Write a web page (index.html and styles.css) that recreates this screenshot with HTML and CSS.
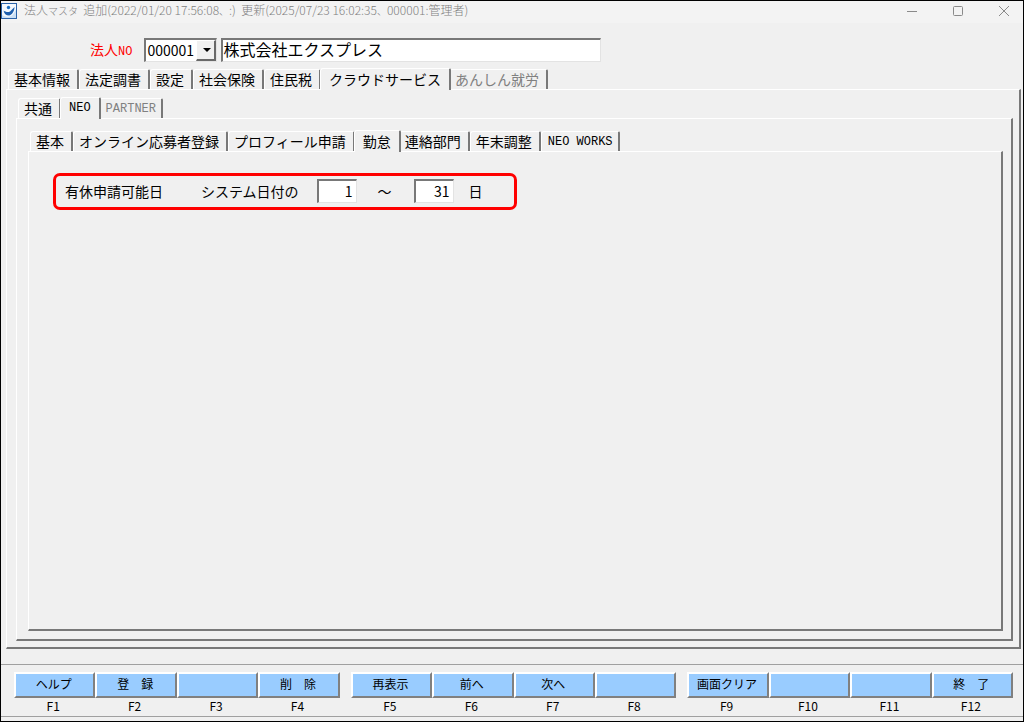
FILE: index.html
```html
<!DOCTYPE html>
<html lang="ja">
<head>
    <meta charset="UTF-8">
    <meta name="viewport" content="width=device-width, initial-scale=1.0">
    <title>法人マスタ</title>
    <link rel="stylesheet" href="styles.css">
</head>
<body>
    <div class="window">
        <header class="title-bar">
            <svg class="app-icon" viewBox="0 0 16 16">
                <rect x="0.5" y="0.5" width="15" height="15" fill="#f4f9fe" stroke="#2a62a8"/>
                <path d="M1 15V12C4 14 7 14 10 13C12 12 14 9 15 6V15Z" fill="#c9dff5"/>
                <circle cx="7.5" cy="4.5" r="1.7" fill="#1d6fc0"/>
                <path d="M2.5 7.5C4.5 9 7 9.5 9 8.5L13.5 4C13.5 8 11 12 8 12.5C5 12.5 3 10.5 2.5 7.5Z" fill="#1d5fae"/>
            </svg>
            <h1 class="title">法人<span class="kana">マスタ</span>&nbsp; 追加(2022/01/20 17:56:08<span class="kana">、</span>:)&nbsp; 更新(2025/07/23 16:02:35<span class="kana">、</span>000001:管理者)</h1>
            <div class="window-buttons">
                <button type="button" aria-label="最小化"><svg viewBox="0 0 12 12"><path d="M1 6.5H11"/></svg></button>
                <button type="button" aria-label="最大化"><svg viewBox="0 0 12 12"><rect x="1.5" y="1.5" width="9" height="9" rx="1"/></svg></button>
                <button type="button" aria-label="閉じる"><svg viewBox="0 0 12 12"><path d="M1 1L11 11M11 1L1 11"/></svg></button>
            </div>
        </header>

        <div class="company">
            <label for="company-no">法人<span class="half">NO</span></label>
            <div class="combo">
                <select id="company-no">
                    <option>000001</option>
                </select>
            </div>
            <input type="text" class="company-name" value="株式会社エクスプレス" aria-label="法人名">
        </div>

        <main class="content">
            <div class="tabs" role="tablist">
                <button type="button" role="tab" class="tab">基本情報</button>
                <button type="button" role="tab" class="tab">法定調書</button>
                <button type="button" role="tab" class="tab">設定</button>
                <button type="button" role="tab" class="tab">社会保険</button>
                <button type="button" role="tab" class="tab">住民税</button>
                <button type="button" role="tab" class="tab active" aria-selected="true">クラウドサービス</button>
                <button type="button" role="tab" class="tab" disabled>あんしん就労</button>
            </div>
            <section class="panel panel-cloud">
                <div class="tabs" role="tablist">
                    <button type="button" role="tab" class="tab">共通</button>
                    <button type="button" role="tab" class="tab half active" aria-selected="true">NEO</button>
                    <button type="button" role="tab" class="tab half" disabled>PARTNER</button>
                </div>
                <section class="panel panel-neo">
                    <div class="tabs" role="tablist">
                        <button type="button" role="tab" class="tab">基本</button>
                        <button type="button" role="tab" class="tab">オンライン応募者登録</button>
                        <button type="button" role="tab" class="tab">プロフィール申請</button>
                        <button type="button" role="tab" class="tab active" aria-selected="true">勤怠</button>
                        <button type="button" role="tab" class="tab">連絡部門</button>
                        <button type="button" role="tab" class="tab">年末調整</button>
                        <button type="button" role="tab" class="tab half">NEO WORKS</button>
                    </div>
                    <section class="panel panel-attendance">
                        <div class="leave-days">
                            <span class="leave-title">有休申請可能日</span>
                            <label for="day-from">システム日付の</label>
                            <input type="text" id="day-from" value="1">
                            <label for="day-to" class="range">～</label>
                            <input type="text" id="day-to" value="31">
                            <span class="unit">日</span>
                        </div>
                    </section>
                </section>
            </section>
        </main>

        <footer class="function-keys">
            <div class="key-group">
                <div class="key"><button type="button" id="f1">ヘルプ</button><label for="f1">F1</label></div>
                <div class="key"><button type="button" id="f2">登　録</button><label for="f2">F2</label></div>
                <div class="key"><button type="button" id="f3"></button><label for="f3">F3</label></div>
                <div class="key"><button type="button" id="f4">削　除</button><label for="f4">F4</label></div>
            </div>
            <div class="key-group">
                <div class="key"><button type="button" id="f5">再表示</button><label for="f5">F5</label></div>
                <div class="key"><button type="button" id="f6">前へ</button><label for="f6">F6</label></div>
                <div class="key"><button type="button" id="f7">次へ</button><label for="f7">F7</label></div>
                <div class="key"><button type="button" id="f8"></button><label for="f8">F8</label></div>
            </div>
            <div class="key-group">
                <div class="key"><button type="button" id="f9">画面クリア</button><label for="f9">F9</label></div>
                <div class="key"><button type="button" id="f10"></button><label for="f10">F10</label></div>
                <div class="key"><button type="button" id="f11"></button><label for="f11">F11</label></div>
                <div class="key"><button type="button" id="f12">終　了</button><label for="f12">F12</label></div>
            </div>
        </footer>
    </div>
</body>
</html>
```
FILE: styles.css
```css
* {
    box-sizing: border-box;
}
body {
    margin: 0;
    background-color: #f0f0f0;
    color: #000;
    font-family: "Noto Sans CJK JP", sans-serif;
    font-size: 14px;
    line-height: 16px;
}
button, input, select {
    margin: 0;
    padding: 0;
    border: none;
    border-radius: 0;
    color: inherit;
    font: inherit;
}
.window {
    display: flex;
    flex-direction: column;
    min-height: 100vh;
    border: 1px solid #000;
}
.half {
    font-family: "Liberation Mono", monospace;
    font-size: 12px;
}

/* title bar */
.title-bar {
    display: flex;
    align-items: center;
    height: 22px;
    padding: 0 13px 3px 0;
    background-color: #f3f3f3;
    color: #808080;
}
.app-icon {
    width: 16px;
    height: 16px;
}
.title {
    flex: 1;
    margin: 0 0 0 7px;
    font-size: 12px;
    font-weight: 300;
    white-space: nowrap;
}
.kana {
    font-size: 10px;
}
.window-buttons {
    display: flex;
    gap: 34px;
}
.window-buttons button {
    width: 12px;
    height: 12px;
    background: none;
}
.window-buttons svg {
    display: block;
    fill: none;
    stroke: #8a8a8a;
}

/* company row */
.company {
    display: flex;
    align-items: center;
    gap: 4px;
    padding: 15px 0 0 89px;
}
.company label {
    margin-right: 8px;
    color: #f00;
}
.company select,
.company-name,
.leave-days input {
    height: 24px;
    background-color: #fff;
    border: 1px solid #e3e3e3;
    border-top: 2px solid #787878;
    border-left: 2px solid #787878;
}
.combo {
    position: relative;
    width: 73px;
}
.company select {
    display: block;
    width: 100%;
    padding: 0 0 2px 1px;
    appearance: none;
}
.combo::before {
    content: "";
    position: absolute;
    top: 2px;
    right: 1px;
    bottom: 1px;
    width: 17px;
    background-color: #f0f0f0;
    border: 1px solid #fff;
    border-right: 2px solid #696969;
    border-bottom: 2px solid #696969;
    pointer-events: none;
}
.combo::after {
    content: "";
    position: absolute;
    top: 10px;
    right: 6px;
    border: 4px solid transparent;
    border-top-color: #000;
    border-bottom: none;
    pointer-events: none;
}
.company-name {
    width: 380px;
    padding-bottom: 3px;
    font-size: 16px;
}

/* tabs */
.content {
    display: flex;
    flex: 1;
    flex-direction: column;
    padding: 6px 2px 15px 5px;
}
.tabs {
    display: flex;
    align-items: flex-end;
    height: 21px;
    padding-left: 2px;
}
.tab {
    height: 20px;
    padding: 0 7px 1px 5px;
    background-color: #f0f0f0;
    border: 1px solid #fff;
    border-right: 2px solid #787878;
    border-bottom: none;
    border-radius: 3px 2px 0 0;
    white-space: nowrap;
}
.tab.half {
    padding: 0 5px 0 6px;
}
.tab:disabled {
    color: #808080;
}
.tab.active {
    position: relative;
    height: 22px;
    margin: 0 -2px -1px -1px;
    padding: 0 8px 2px;
}
.panel {
    display: flex;
    flex: 1;
    flex-direction: column;
    border: 2px solid #787878;
    border-top: 1px solid #fff;
    border-left: 1px solid #fff;
}
.panel-cloud {
    padding: 7px 6px 6px 9px;
}
.panel-neo {
    padding: 11px 8px 8px 11px;
}
.panel-attendance {
    align-items: flex-start;
    padding: 21px 24px;
}

/* leave request days */
.leave-days {
    display: flex;
    align-items: center;
    width: 464px;
    height: 37px;
    padding: 0 0 2px 9px;
    border: 3px solid #f00;
    border-radius: 7px;
}
.leave-title {
    margin-right: 38px;
}
.leave-days input {
    width: 40px;
    margin-left: 18px;
    padding-right: 3px;
    text-align: right;
}
.range {
    margin: 0 4px 0 21px;
}
.unit {
    margin-left: 15px;
}

/* function keys */
.function-keys {
    display: flex;
    gap: 11px;
    margin-bottom: 4px;
    padding: 7px 10px 0 13px;
    border-top: 1px solid #a0a0a0;
    border-bottom: 1px solid #a0a0a0;
    font-size: 12px;
}
.key-group {
    display: flex;
    flex: 1;
}
.key {
    display: flex;
    flex: 1;
    flex-direction: column;
    text-align: center;
}
.key button {
    height: 26px;
    padding: 0 2px 2px 0;
    background-color: #99ccff;
    border: 2px solid #fff;
    border-right-color: #808080;
    border-bottom-color: #808080;
}
.key label {
    padding: 0 3px 2px 0;
}
```
